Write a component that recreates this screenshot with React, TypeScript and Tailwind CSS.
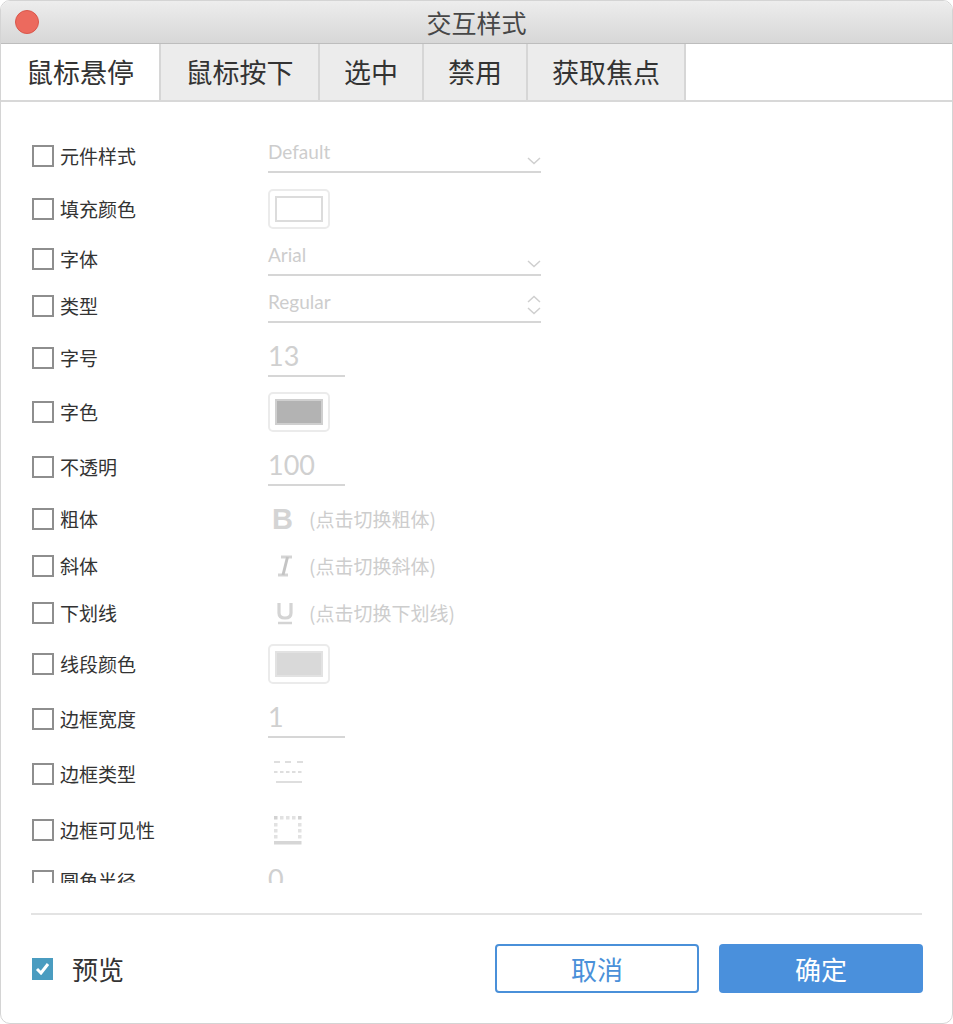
import React from "react";

type Control =
  | { kind: "select"; value: string; spinner?: boolean }
  | { kind: "color"; fill: string; inner: string }
  | { kind: "number"; value: string }
  | { kind: "toggle"; icon: "B" | "I" | "U"; hint: string }
  | { kind: "borderType" }
  | { kind: "borderVis" };

type Row = { label: string; gap: string; control: Control };

const rows: Row[] = [
  { label: "元件样式", gap: "mt-0", control: { kind: "select", value: "Default" } },
  { label: "填充颜色", gap: "mt-[13px]", control: { kind: "color", fill: "bg-white", inner: "border-[#dcdcdc]" } },
  { label: "字体", gap: "mt-[10px]", control: { kind: "select", value: "Arial" } },
  { label: "类型", gap: "mt-[7px]", control: { kind: "select", value: "Regular", spinner: true } },
  { label: "字号", gap: "mt-[12px]", control: { kind: "number", value: "13" } },
  { label: "字色", gap: "mt-[14px]", control: { kind: "color", fill: "bg-[#b3b3b3]", inner: "border-[#cfcfcf]" } },
  { label: "不透明", gap: "mt-[15px]", control: { kind: "number", value: "100" } },
  { label: "粗体", gap: "mt-[12px]", control: { kind: "toggle", icon: "B", hint: "(点击切换粗体)" } },
  { label: "斜体", gap: "mt-[7px]", control: { kind: "toggle", icon: "I", hint: "(点击切换斜体)" } },
  { label: "下划线", gap: "mt-[7px]", control: { kind: "toggle", icon: "U", hint: "(点击切换下划线)" } },
  { label: "线段颜色", gap: "mt-[11px]", control: { kind: "color", fill: "bg-[#d9d9d9]", inner: "border-[#e2e2e2]" } },
  { label: "边框宽度", gap: "mt-[15px]", control: { kind: "number", value: "1" } },
  { label: "边框类型", gap: "mt-[15px]", control: { kind: "borderType" } },
  { label: "边框可见性", gap: "mt-[16px]", control: { kind: "borderVis" } },
  { label: "圆角半径", gap: "mt-[11px]", control: { kind: "number", value: "0" } },
];

const tabs = [
  { name: "鼠标悬停", w: "w-[160px]", active: true },
  { name: "鼠标按下", w: "w-[159px]" },
  { name: "选中", w: "w-[104px]" },
  { name: "禁用", w: "w-[104px]" },
  { name: "获取焦点", w: "w-[158px]" },
];

const Chevron = ({ up = false }: { up?: boolean }) => (
  <svg width="14" height="8" viewBox="0 0 14 8" className="block">
    <path
      d={up ? "M1 7 L7 1.5 L13 7" : "M1 1 L7 6.5 L13 1"}
      fill="none"
      stroke="#cfcfcf"
      strokeWidth="1.5"
    />
  </svg>
);

const ToggleIcon = ({ icon }: { icon: "B" | "I" | "U" }) => {
  if (icon === "B") {
    return (
      <span className="w-[26px] text-[29px] font-bold leading-none text-[#d4d4d4] font-['Liberation_Sans',sans-serif]">
        B
      </span>
    );
  }
  if (icon === "I") {
    return (
      <svg width="26" height="26" viewBox="0 0 26 26">
        <path d="M9 4 H20" stroke="#d4d4d4" strokeWidth="3" />
        <path d="M6 22 H16" stroke="#d4d4d4" strokeWidth="3" />
        <path d="M15.5 4 L11 22" stroke="#c4c4c4" strokeWidth="3" />
      </svg>
    );
  }
  return (
    <svg width="26" height="26" viewBox="0 0 26 26">
      <path d="M7 3 V13 Q7 18 13 18 Q19 18 19 13 V3" fill="none" stroke="#d4d4d4" strokeWidth="3.2" />
      <path d="M6 23 H20" stroke="#d4d4d4" strokeWidth="2.5" />
    </svg>
  );
};

const ControlView = ({ c }: { c: Control }) => {
  switch (c.kind) {
    case "select":
      return (
        <div className="relative w-[273px] h-[34px] border-b-2 border-[#d6d6d6]">
          <span className="block pt-[1px] text-[19px] leading-[24px] text-[#cdcdcd] font-['Lato',sans-serif]">
            {c.value}
          </span>
          {c.spinner ? (
            <div className="absolute right-[0px] bottom-[6px] flex flex-col gap-[4px]">
              <Chevron up />
              <Chevron />
            </div>
          ) : (
            <div className="absolute right-[0px] bottom-[6px]">
              <Chevron />
            </div>
          )}
        </div>
      );
    case "color":
      return (
        <div className="w-[62px] h-[40px] rounded-[5px] border-2 border-[#ebebeb] px-[5px] py-[5px] bg-white">
          <div className={`w-full h-full border-2 ${c.inner} ${c.fill}`} />
        </div>
      );
    case "number":
      return (
        <div className="w-[77px] h-[38px] border-b-2 border-[#d6d6d6]">
          <span className="block text-[27px] leading-[34px] text-[#d0d0d0] font-['Lato',sans-serif]">
            {c.value}
          </span>
        </div>
      );
    case "toggle":
      return (
        <div className="flex items-center">
          <div className="w-[41px] flex items-center pl-[4px]">
            <ToggleIcon icon={c.icon} />
          </div>
          <span className="text-[19px] text-[#cdcdcd]">{c.hint}</span>
        </div>
      );
    case "borderType":
      return (
        <svg width="40" height="30" viewBox="0 0 40 30" className="ml-[4px]">
          <g stroke="#dedede" strokeWidth="2">
            <path d="M2 3 H8 M13 3 H19 M25 3 H31" />
            <path d="M2 13 H5.5 M8 13 H11.5 M14 13 H17.5 M20 13 H23.5 M26 13 H29.5" />
            <path d="M4 23 H30" />
          </g>
        </svg>
      );
    case "borderVis":
      return (
        <svg width="40" height="32" viewBox="0 0 40 32" className="ml-[4px]">
          <g fill="#e2e2e2">
            <rect x="2" y="2" width="3.5" height="3.5" fill="#d2d2d2" />
            <rect x="8" y="2" width="3.5" height="3.5" />
            <rect x="14" y="2" width="3.5" height="3.5" />
            <rect x="20" y="2" width="3.5" height="3.5" />
            <rect x="26" y="2" width="3.5" height="3.5" fill="#d2d2d2" />
            <rect x="2" y="9" width="3.5" height="3.5" />
            <rect x="2" y="15" width="3.5" height="3.5" />
            <rect x="2" y="21" width="3.5" height="3.5" />
            <rect x="26" y="9" width="3.5" height="3.5" />
            <rect x="26" y="15" width="3.5" height="3.5" />
            <rect x="26" y="21" width="3.5" height="3.5" />
            <rect x="2" y="27" width="27.5" height="3.5" fill="#d6d6d6" />
          </g>
        </svg>
      );
  }
};

export default function App() {
  return (
    <div className="w-[953px] h-[1024px] bg-white overflow-hidden rounded-[10px] border border-[#d4d4d4] font-['Noto_Sans_CJK_SC',sans-serif]">
      {/* Title bar */}
      <div className="relative h-[43px] flex items-center justify-center bg-gradient-to-b from-[#ededed] to-[#d7d7d7] border-b border-[#bdbdbd]">
        <span className="absolute left-[14px] top-[9px] w-[24px] h-[24px] rounded-full bg-[#ec6a5e] border border-[#d9574b]" />
        <span className="text-[25px] text-[#474747] leading-none">交互样式</span>
      </div>

      {/* Tabs */}
      <div className="flex h-[58px] border-b-2 border-[#d8d8d8] bg-white">
        {tabs.map((t) => (
          <div
            key={t.name}
            className={`${t.w} flex items-center justify-center border-r-2 border-[#d6d6d6] text-[27px] text-[#333] ${
              t.active ? "bg-white" : "bg-[#ececec]"
            }`}
          >
            {t.name}
          </div>
        ))}
      </div>

      {/* Properties */}
      <div className="h-[781px] overflow-hidden pl-[31px] pt-[34px]">
        {rows.map((r) => (
          <div key={r.label} className={`flex items-center h-[40px] ${r.gap}`}>
            <span className="w-[22px] h-[22px] border-2 border-[#8e8e8e] bg-white shrink-0" />
            <span className="ml-[6px] w-[208px] text-[19px] text-[#333]">{r.label}</span>
            <ControlView c={r.control} />
          </div>
        ))}
      </div>

      {/* Footer */}
      <div className="mx-[30px] mt-[30px] border-t-2 border-[#e3e3e3]" />
      <div className="flex items-center justify-between pl-[31px] pr-[29px] mt-[29px]">
        <label className="flex items-center gap-[19px]">
          <span className="w-[21px] h-[22px] bg-[#4a9cc0] flex items-center justify-center">
            <svg width="15" height="13" viewBox="0 0 15 13">
              <path d="M2 7 L6 11 L13 2" fill="none" stroke="#fff" strokeWidth="3" />
            </svg>
          </span>
          <span className="text-[26px] text-[#333]">预览</span>
        </label>
        <div className="flex gap-[20px]">
          <button className="w-[204px] h-[49px] rounded-[4px] border-2 border-[#4a90d9] bg-white text-[26px] text-[#4a90d9]">
            取消
          </button>
          <button className="w-[204px] h-[49px] rounded-[4px] bg-[#4a90dc] text-[26px] text-white">
            确定
          </button>
        </div>
      </div>
    </div>
  );
}
